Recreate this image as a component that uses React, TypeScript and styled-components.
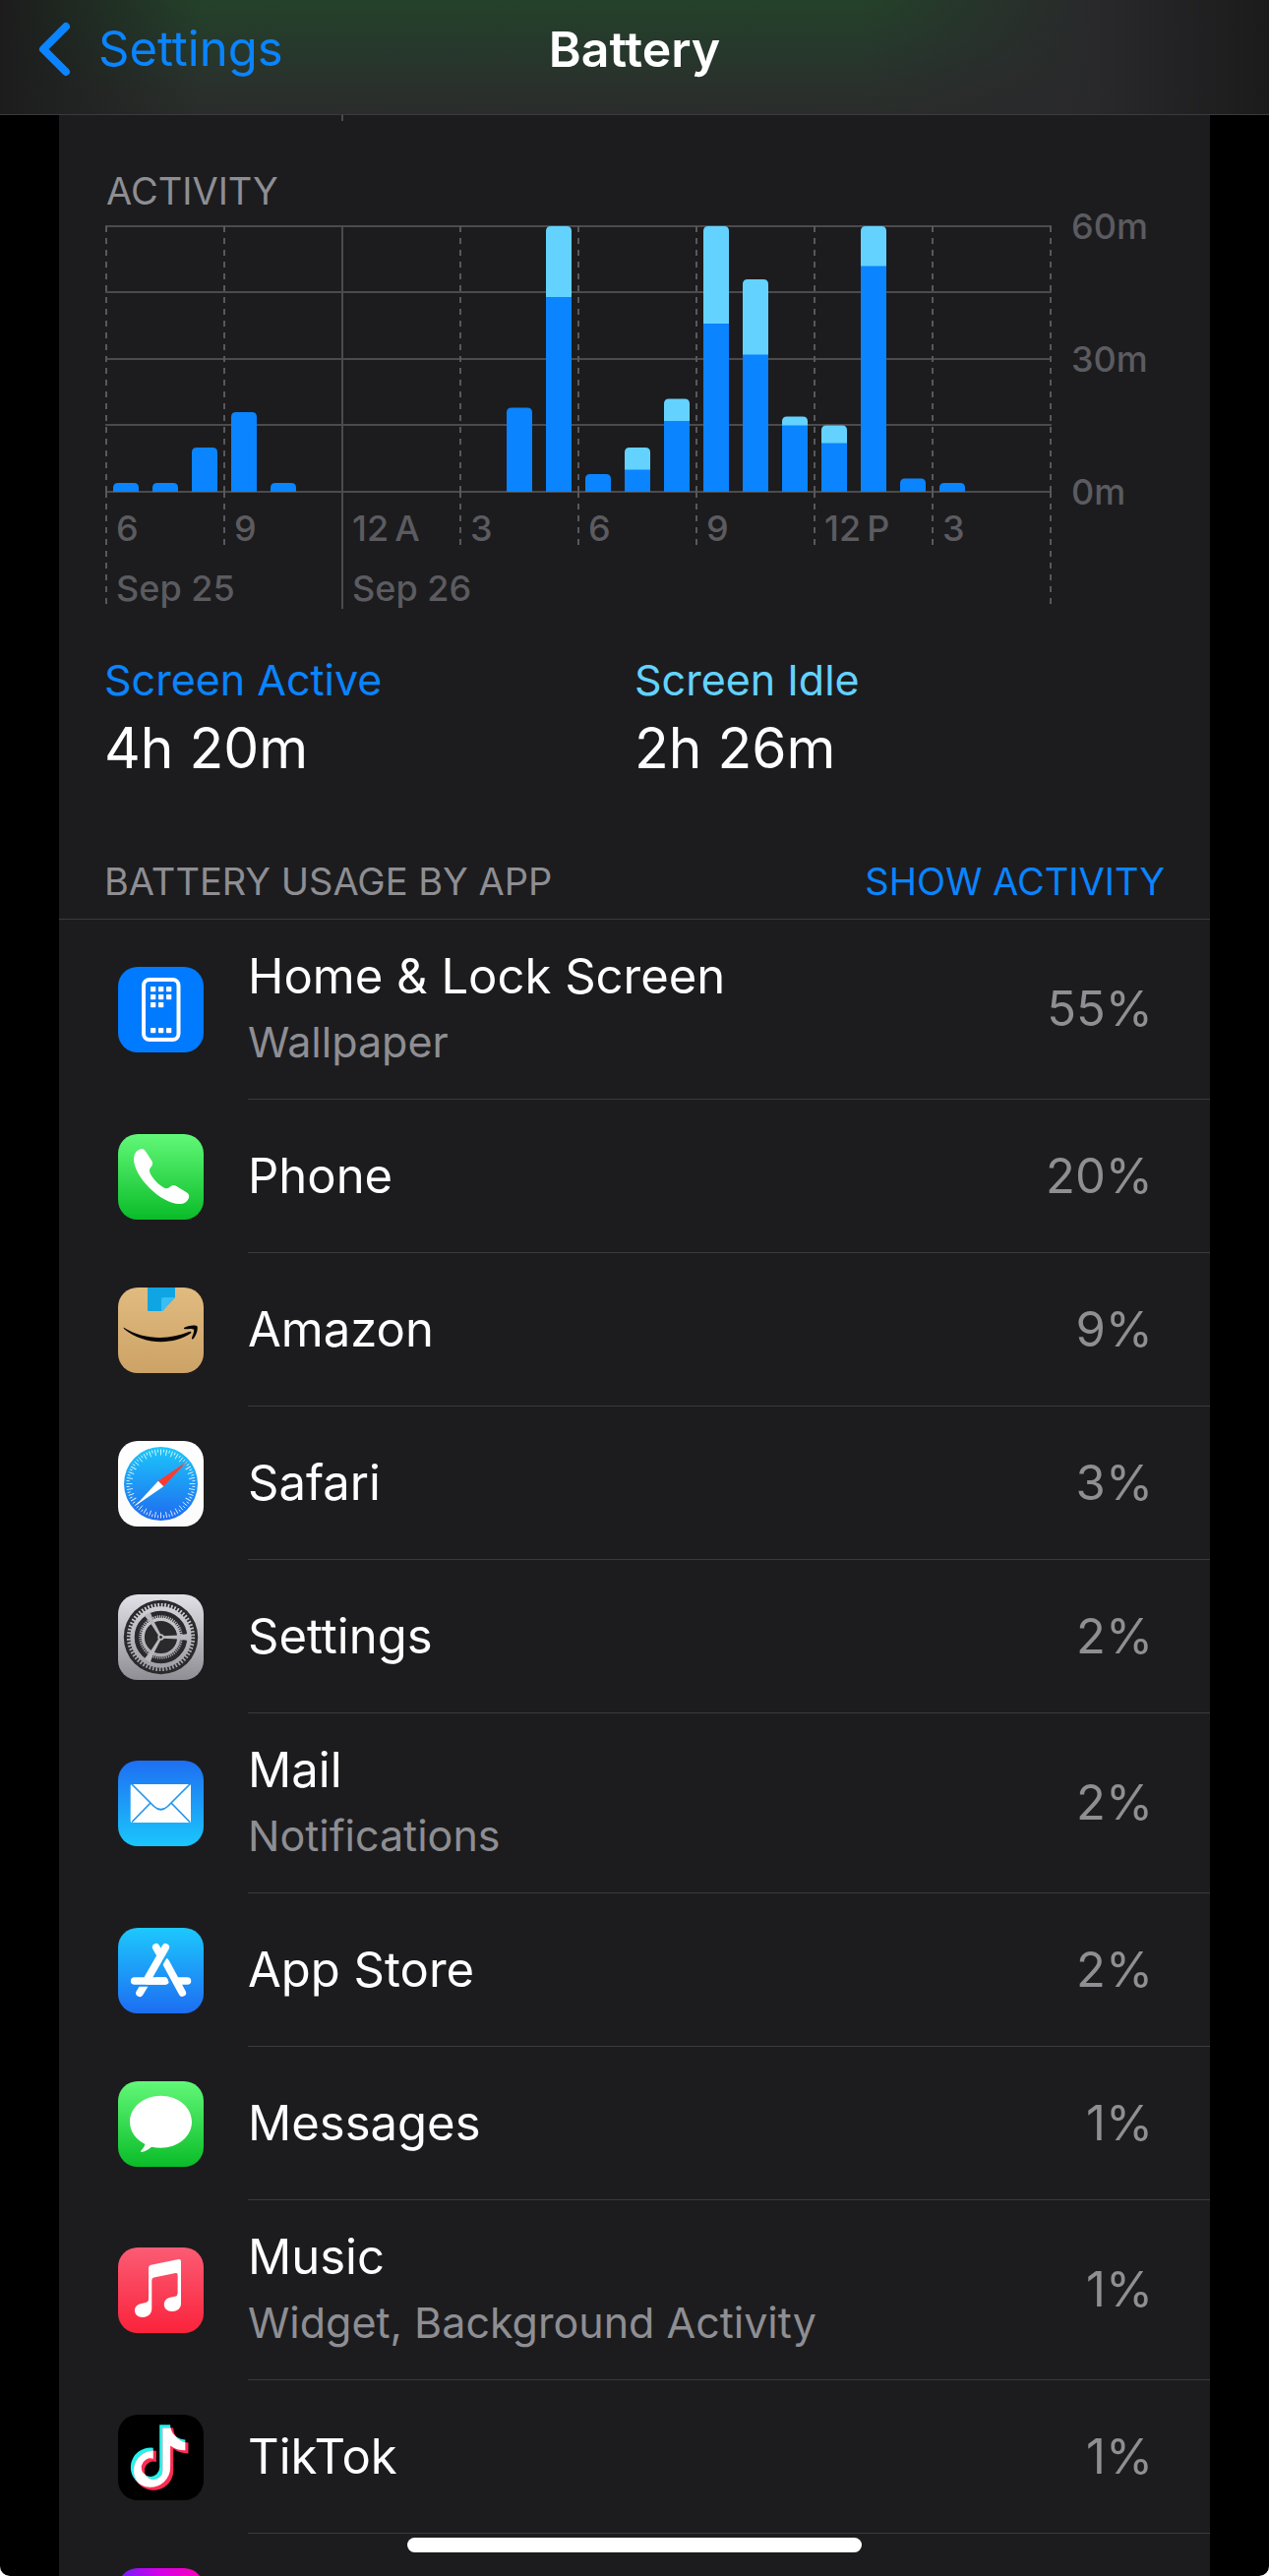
import React from "react";
import styled, { createGlobalStyle } from "styled-components";

const color = {
  blue: "#0a84ff",
  cyan: "#64d2ff",
  panel: "#1c1c1e",
  line: "#3a3a3d",
  grid: "#4b4b4e",
  dash: "#58585c",
  axis: "#5b5b60",
  secondary: "#8e8e93",
};

const Global = createGlobalStyle`
  * { box-sizing: border-box; }
  html, body { margin: 0; background: #fff; }
  body { font-family: Inter, "Liberation Sans", sans-serif; color: #fff; }
`;

const Screen = styled.div`
  height: 100vh;
  overflow: hidden;
  border-radius: 0 0 10px 10px;
  background: #000;
`;

const NavBar = styled.header`
  display: grid;
  grid-template-columns: 1fr auto 1fr;
  align-items: center;
  padding: 18px 38px 34px;
  border-bottom: 1px solid #3b3b3e;
  background:
    linear-gradient(90deg, #1c1c1c 0%, rgba(28, 28, 28, 0) 16%, rgba(41, 41, 43, 0) 68%, #29292b 86%, #1b1b1c 100%),
    linear-gradient(180deg, #24412a 0%, #26392c 40%, #2a302c 78%, #2a2d2b 100%);
`;

const BackLink = styled.a`
  display: flex;
  align-items: center;
  gap: 28px;
  color: ${color.blue};
  font-size: 49px;
  line-height: 64px;
  text-decoration: none;
`;

const Title = styled.h1`
  margin: 0;
  font-size: 50px;
  font-weight: 600;
  line-height: 64px;
`;

const Panel = styled.main`
  margin: 0 60px;
  background: ${color.panel};
`;

const Strip = styled.svg`
  display: block;
  width: 100%;
`;

const Caption = styled.h2`
  margin: 0;
  color: ${color.secondary};
  font-size: 38px;
  font-weight: 400;
  line-height: 48px;
`;

const ChartHead = styled.div`
  padding: 45px 48px 0;
`;

const ChartSvg = styled.svg`
  display: block;
  width: 100%;
  margin-top: -12px;
`;

const AxisText = styled.text`
  fill: ${color.axis};
  font-size: 36px;
  font-weight: 500;
`;

const Stats = styled.dl`
  display: grid;
  grid-template-columns: 1fr 1fr;
  margin: 0;
  padding: 37px 46px 69px;
`;

const Stat = styled.div`
  min-width: 0;
`;

const StatLabel = styled.dt<{ $tone: string }>`
  color: ${(p) => p.$tone};
  font-size: 43px;
  line-height: 56px;
`;

const StatValue = styled.dd`
  margin: 0;
  font-size: 57px;
  line-height: 84px;
`;

const ListHead = styled.div`
  display: flex;
  justify-content: space-between;
  padding: 0 46px 14px;
  border-bottom: 1px solid ${color.line};
`;

const TextButton = styled.button`
  padding: 0;
  border: 0;
  background: none;
  color: ${color.blue};
  font: inherit;
  font-size: 38px;
  line-height: 48px;
`;

const List = styled.ul`
  margin: 0;
  padding: 0;
  list-style: none;
`;

const Row = styled.li`
  display: flex;
  align-items: center;
  gap: 45px;
  padding-left: 60px;
`;

const IconSvg = styled.svg`
  flex: none;
  width: 87px;
  height: 87px;
  border-radius: 20px;
`;

const RowBody = styled.div`
  flex: 1;
  display: flex;
  align-items: center;
  justify-content: space-between;
  min-height: 156px;
  padding: 25px 58px 25px 0;
  border-bottom: 1px solid ${color.line};
`;

const Name = styled.div`
  font-size: 49px;
  line-height: 66px;
`;

const Detail = styled.div`
  color: ${color.secondary};
  font-size: 43px;
  line-height: 66px;
`;

const Percent = styled.div`
  color: ${color.secondary};
  font-size: 49px;
  line-height: 66px;
`;

const HomeIndicator = styled.div`
  position: fixed;
  left: 50%;
  bottom: 24px;
  width: 462px;
  height: 15px;
  margin-left: -231px;
  border-radius: 8px;
  background: #fff;
`;

/* ---------- activity chart ---------- */

type Hour = { active: number; idle?: number };

const HOURS: Hour[] = [
  { active: 2 }, { active: 2 }, { active: 10 }, { active: 18 }, { active: 2 },
  { active: 0 }, { active: 0 }, { active: 0 }, { active: 0 }, { active: 0 },
  { active: 19 }, { active: 44, idle: 16 }, { active: 4 }, { active: 5, idle: 5 },
  { active: 16, idle: 5 }, { active: 38, idle: 22 }, { active: 31, idle: 17 },
  { active: 15, idle: 2 }, { active: 11, idle: 4 }, { active: 51, idle: 9 },
  { active: 3 }, { active: 2 }, { active: 0 }, { active: 0 },
];

const TICKS = ["6", "9", "12\u2009A", "3", "6", "9", "12\u2009P", "3"];

const LEFT = 48;
const TOP = 12;
const BASE = 282;
const STEP = 40;
const MINUTE = (BASE - TOP) / 60;

function Bar({ index, hour }: { index: number; hour: Hour }) {
  const total = hour.active + (hour.idle ?? 0);
  if (!total) return null;
  const x = LEFT + index * STEP + 7;
  const top = BASE - total * MINUTE;
  const split = BASE - hour.active * MINUTE;
  return (
    <g>
      <path
        d={`M${x} ${BASE}V${top + 5}q0 -5 5 -5h16q5 0 5 5V${BASE}z`}
        fill={hour.idle ? color.cyan : color.blue}
      />
      {hour.idle ? <rect x={x} y={split} width="26" height={BASE - split} fill={color.blue} /> : null}
    </g>
  );
}

function ActivityChart() {
  const right = LEFT + STEP * 24;
  return (
    <ChartSvg viewBox="0 -12 1170 420" role="img" aria-label="Screen activity by hour">
      {[12, 79, 147, 214, 282].map((y) => (
        <path key={y} d={`M${LEFT - 1} ${y}H${right + 1}`} stroke={color.grid} strokeWidth="2" />
      ))}
      {Array.from({ length: 9 }, (_, i) => {
        const x = LEFT + i * STEP * 3;
        const edge = i === 0 || i === 8;
        return i === 2 ? (
          <path key={i} d={`M${x} ${TOP}V401`} stroke={color.grid} strokeWidth="2" />
        ) : (
          <path
            key={i}
            d={`M${x} ${TOP}V${BASE}M${x} ${BASE}V${edge ? 396 : 336}`}
            stroke={color.dash}
            strokeWidth="2"
            strokeDasharray="6 6"
          />
        );
      })}
      {HOURS.map((hour, i) => (
        <Bar key={i} index={i} hour={hour} />
      ))}
      {TICKS.map((label, i) => (
        <AxisText key={i} x={LEFT + i * STEP * 3 + 10} y="332">
          {label}
        </AxisText>
      ))}
      <AxisText x="58" y="393">Sep 25</AxisText>
      <AxisText x="298" y="393">Sep 26</AxisText>
      <AxisText x="1029" y="25">60m</AxisText>
      <AxisText x="1029" y="160">30m</AxisText>
      <AxisText x="1029" y="295">0m</AxisText>
    </ChartSvg>
  );
}

/* ---------- app icons ---------- */

function Tile({ id, from, to, children }: { id: string; from: string; to: string; children?: React.ReactNode }) {
  return (
    <IconSvg viewBox="0 0 87 87" aria-hidden="true">
      <linearGradient id={id} x1="0" y1="0" x2="0" y2="87" gradientUnits="userSpaceOnUse">
        <stop offset="0" stopColor={from} />
        <stop offset="1" stopColor={to} />
      </linearGradient>
      <rect width="87" height="87" fill={`url(#${id})`} />
      {children}
    </IconSvg>
  );
}

const DOTS = [
  [33, 20], [41, 20], [49, 20],
  [33, 28], [41, 28], [49, 28],
  [33, 36], [41, 36],
  [33, 62], [41, 62], [49, 62],
];

const HomeIcon = () => (
  <Tile id="home" from="#007aff" to="#007aff">
    <rect x="26" y="13" width="35.5" height="61" rx="6" fill="none" stroke="#fff" strokeWidth="4" />
    {DOTS.map(([x, y]) => (
      <rect key={`${x}-${y}`} x={x} y={y} width="5.3" height="5.3" rx="0.8" fill="#fff" />
    ))}
  </Tile>
);

const PhoneIcon = () => (
  <Tile id="phone" from="#62f878" to="#0abc28">
    <path
      fill="#fff"
      d="M18 18.500Q21 15 24.500 15Q26.500 15 28 17.500L34.500 27.500Q36 30.500 33.500 33.500Q31 36 32.500 39.500C35 45 42 52.500 47.500 55Q50 56 52.500 54Q55.500 51 58.500 52.500L70 59.500Q73.500 62 71.500 66Q69 71 63 71C44 71.500 15.500 43 16 25Q16 21 18 18.500Z"
    />
  </Tile>
);

const AmazonIcon = () => (
  <Tile id="amazon" from="#e0bb80" to="#cda266">
    <path d="M30 0H58V10L45 24H31Q30 24 30 23Z" fill="#0fa5e2" />
    <path d="M44 12Q44 10 46 10H58L45 24H44Z" fill="#38bdf5" />
    <path d="M5.500 40.500C26 53.500 52 53.500 72 45Q75.500 43.800 74 46.500C56 58.500 27 59 6 42Z" fill="#080604" />
    <path
      d="M67 41C70.500 38.500 79 37.500 80.600 39.500C81.500 43.500 79 50 76 52.500Q74.500 53 75 51C76.500 47.500 77.800 43.800 76.800 42.600C75.600 41.400 71 42 68 42.300Q66.500 42.300 67 41Z"
      fill="#080604"
    />
  </Tile>
);

const SafariIcon = () => (
  <Tile id="safari" from="#ffffff" to="#fbfbfb">
    <linearGradient id="sea" x1="0" y1="0" x2="0" y2="1">
      <stop offset="0" stopColor="#1cc7fa" />
      <stop offset="1" stopColor="#1f6af0" />
    </linearGradient>
    <circle cx="43.500" cy="43.500" r="37.500" fill="url(#sea)" />
    {Array.from({ length: 72 }, (_, i) => (
      <path
        key={i}
        d={i % 2 ? "M43.500 8.500V11.500" : "M43.500 8.500V14.500"}
        stroke="#fff"
        strokeOpacity="0.85"
        strokeWidth="0.9"
        transform={`rotate(${i * 5} 43.500 43.500)`}
      />
    ))}
    <path d="M70 21L40.800 40.800L46.300 46.300Z" fill="#fd3b2f" />
    <path d="M17.500 66L40.800 40.800L46.300 46.300Z" fill="#fff" />
  </Tile>
);

const GearIcon = () => (
  <Tile id="gear" from="#e2e1e7" to="#8f8e94">
    <linearGradient id="metal" x1="0" y1="9" x2="0" y2="78" gradientUnits="userSpaceOnUse">
      <stop offset="0" stopColor="#d4d3d8" />
      <stop offset="1" stopColor="#9d9ca2" />
    </linearGradient>
    <circle cx="43.500" cy="43.500" r="37.700" fill="#2a2a2d" />
    <g fill="none" stroke="url(#metal)">
      <circle cx="43.500" cy="43.500" r="29" strokeWidth="4.400" />
      <circle cx="43.500" cy="43.500" r="32.600" strokeWidth="4" strokeDasharray="1.700 1.714" />
      <circle cx="43.500" cy="43.500" r="18.200" strokeWidth="3.200" />
      <circle cx="43.500" cy="43.500" r="20.800" strokeWidth="3" strokeDasharray="1.100 1.078" />
    </g>
    {[0, 120, 240].map((a) => (
      <g key={a} transform={`rotate(${a} 43.500 43.500)`} fill="url(#metal)">
        <path d="M45 42.300L62 41.500L71 40V47L62 45.500L45 44.700Z" />
      </g>
    ))}
    <circle cx="43.500" cy="43.500" r="3.200" fill="#b9b8bd" />
    <circle cx="43.500" cy="43.500" r="1.400" fill="#2a2a2d" />
  </Tile>
);

const MailIcon = () => (
  <Tile id="mail" from="#1e6ff2" to="#1bc6fc">
    <rect x="12.700" y="24" width="61.300" height="39" rx="1.500" fill="#fff" />
    <path
      d="M14 24L36.500 46.500Q43.500 53 50.500 46.500L73 24M32.500 43.500L14 62.500M54.500 43.500L73 62.500"
      fill="none"
      stroke="#2196ee"
      strokeWidth="1.700"
    />
  </Tile>
);

const StoreIcon = () => (
  <Tile id="store" from="#1dc8fd" to="#1d6df2">
    <g fill="none" strokeLinecap="round" strokeWidth="7.600">
      <path d="M27 58L22 66.200" stroke="#fff" />
      <path d="M17 55.500H42" stroke="url(#store)" strokeWidth="8.500" />
      <path d="M16.700 54H48" stroke="#fff" />
      <path d="M38.700 19.800L42 25.500" stroke="#fff" />
      <path d="M46.500 38L61.500 64" stroke="url(#store)" strokeWidth="8" />
      <path d="M60 54H70.500" stroke="#fff" />
      <path d="M48.500 35L65.300 66" stroke="#fff" />
      <path d="M50 22L34 50" stroke="url(#store)" strokeWidth="7.600" strokeLinecap="butt" />
      <path d="M48.300 19.800L30.500 51" stroke="#fff" />
      <path d="M30 54H47" stroke="#fff" />
    </g>
  </Tile>
);

const MessagesIcon = () => (
  <Tile id="messages" from="#62f878" to="#0abc28">
    <path
      fill="#fff"
      d="M43.500 14.800C61 14.800 75 26.600 75 41.300S61 67.800 43.500 67.800Q38.500 67.800 34 66.700Q29 71.200 23.500 72Q22.500 71.500 23.500 70.500Q26.500 67.500 27.500 64C18 59.300 12 51 12 41.300C12 26.600 26 14.800 43.500 14.800Z"
    />
  </Tile>
);

const MusicIcon = () => (
  <Tile id="music" from="#fb5c74" to="#fa233b">
    <path
      fill="#fff"
      d="M33.500 17.700L61.500 12.100Q64 11.700 64 14V57C64 62 60 65 55 65C50 65 46.800 62 46.800 58C46.800 54.500 49 51.800 53 50.800L58 49.800Q60.600 49 60.600 46.500V27.500Q60.600 25.700 58.500 26L36.500 30.500Q34.300 31 34.300 33V62C34.300 67.500 30.500 71 25 71C20 71 17 68 17 64C17 60.500 19.500 57.800 23.500 57L28 56Q31 55.300 31 52.500V21Q31 18.200 33.500 17.700Z"
    />
  </Tile>
);

const NOTE =
  "M448,209.910a210.060,210.060,0,0,1-122.770-39.250V349.380A162.550,162.550,0,1,1,185,188.310V278.200a74.620,74.620,0,1,0,52.230,71.180V0l88,0a121.180,121.180,0,0,0,1.860,22.170h0A122.180,122.180,0,0,0,381,102.390a121.430,121.430,0,0,0,67,20.140Z";
const NOTE_BACK = "translate(12.800 10.300) scale(0.124)";
const NOTE_FRONT = "translate(15.900 13.400) scale(0.124)";

const TikTokIcon = () => (
  <Tile id="tiktok" from="#000000" to="#000000">
    <clipPath id="note-back">
      <path d={NOTE} transform={NOTE_BACK} />
    </clipPath>
    <path d={NOTE} fill="#25f4ee" transform={NOTE_BACK} />
    <path d={NOTE} fill="#fe2c55" transform={NOTE_FRONT} />
    <g clipPath="url(#note-back)">
      <path d={NOTE} fill="#ffffff" transform={NOTE_FRONT} />
    </g>
  </Tile>
);

const GradientIcon = () => (
  <IconSvg viewBox="0 0 87 87" aria-hidden="true">
    <linearGradient id="violet" x1="0" y1="0.300" x2="1" y2="0">
      <stop offset="0" stopColor="#5a22ff" />
      <stop offset="0.500" stopColor="#d400ea" />
      <stop offset="1" stopColor="#ff00b4" />
    </linearGradient>
    <rect width="87" height="87" fill="url(#violet)" />
  </IconSvg>
);

/* ---------- page ---------- */

type AppUsage = { name: string; detail?: string; percent: string; Icon: React.FC };

const APPS: AppUsage[] = [
  { name: "Home & Lock Screen", detail: "Wallpaper", percent: "55%", Icon: HomeIcon },
  { name: "Phone", percent: "20%", Icon: PhoneIcon },
  { name: "Amazon", percent: "9%", Icon: AmazonIcon },
  { name: "Safari", percent: "3%", Icon: SafariIcon },
  { name: "Settings", percent: "2%", Icon: GearIcon },
  { name: "Mail", detail: "Notifications", percent: "2%", Icon: MailIcon },
  { name: "App Store", percent: "2%", Icon: StoreIcon },
  { name: "Messages", percent: "1%", Icon: MessagesIcon },
  { name: "Music", detail: "Widget, Background Activity", percent: "1%", Icon: MusicIcon },
  { name: "TikTok", percent: "1%", Icon: TikTokIcon },
];

export default function App() {
  return (
    <Screen>
      <Global />
      <NavBar>
        <BackLink href="#settings">
          <svg width="34" height="56" viewBox="0 0 34 56" aria-hidden="true">
            <path
              d="M29 5L6 28L29 51"
              fill="none"
              stroke={color.blue}
              strokeWidth="8"
              strokeLinecap="round"
              strokeLinejoin="round"
            />
          </svg>
          Settings
        </BackLink>
        <Title>Battery</Title>
      </NavBar>
      <Panel>
        <Strip viewBox="0 0 1170 8" aria-hidden="true">
          <path d="M288 0V6" stroke={color.grid} strokeWidth="2" />
        </Strip>
        <ChartHead>
          <Caption>ACTIVITY</Caption>
        </ChartHead>
        <ActivityChart />
        <Stats>
          <Stat>
            <StatLabel $tone={color.blue}>Screen Active</StatLabel>
            <StatValue>4h 20m</StatValue>
          </Stat>
          <Stat>
            <StatLabel $tone={color.cyan}>Screen Idle</StatLabel>
            <StatValue>2h 26m</StatValue>
          </Stat>
        </Stats>
        <ListHead>
          <Caption>BATTERY USAGE BY APP</Caption>
          <TextButton type="button">SHOW ACTIVITY</TextButton>
        </ListHead>
        <List>
          {APPS.map(({ name, detail, percent, Icon }) => (
            <Row key={name}>
              <Icon />
              <RowBody>
                <div>
                  <Name>{name}</Name>
                  {detail ? <Detail>{detail}</Detail> : null}
                </div>
                <Percent>{percent}</Percent>
              </RowBody>
            </Row>
          ))}
          <Row>
            <GradientIcon />
            <RowBody />
          </Row>
        </List>
      </Panel>
      <HomeIndicator />
    </Screen>
  );
}
